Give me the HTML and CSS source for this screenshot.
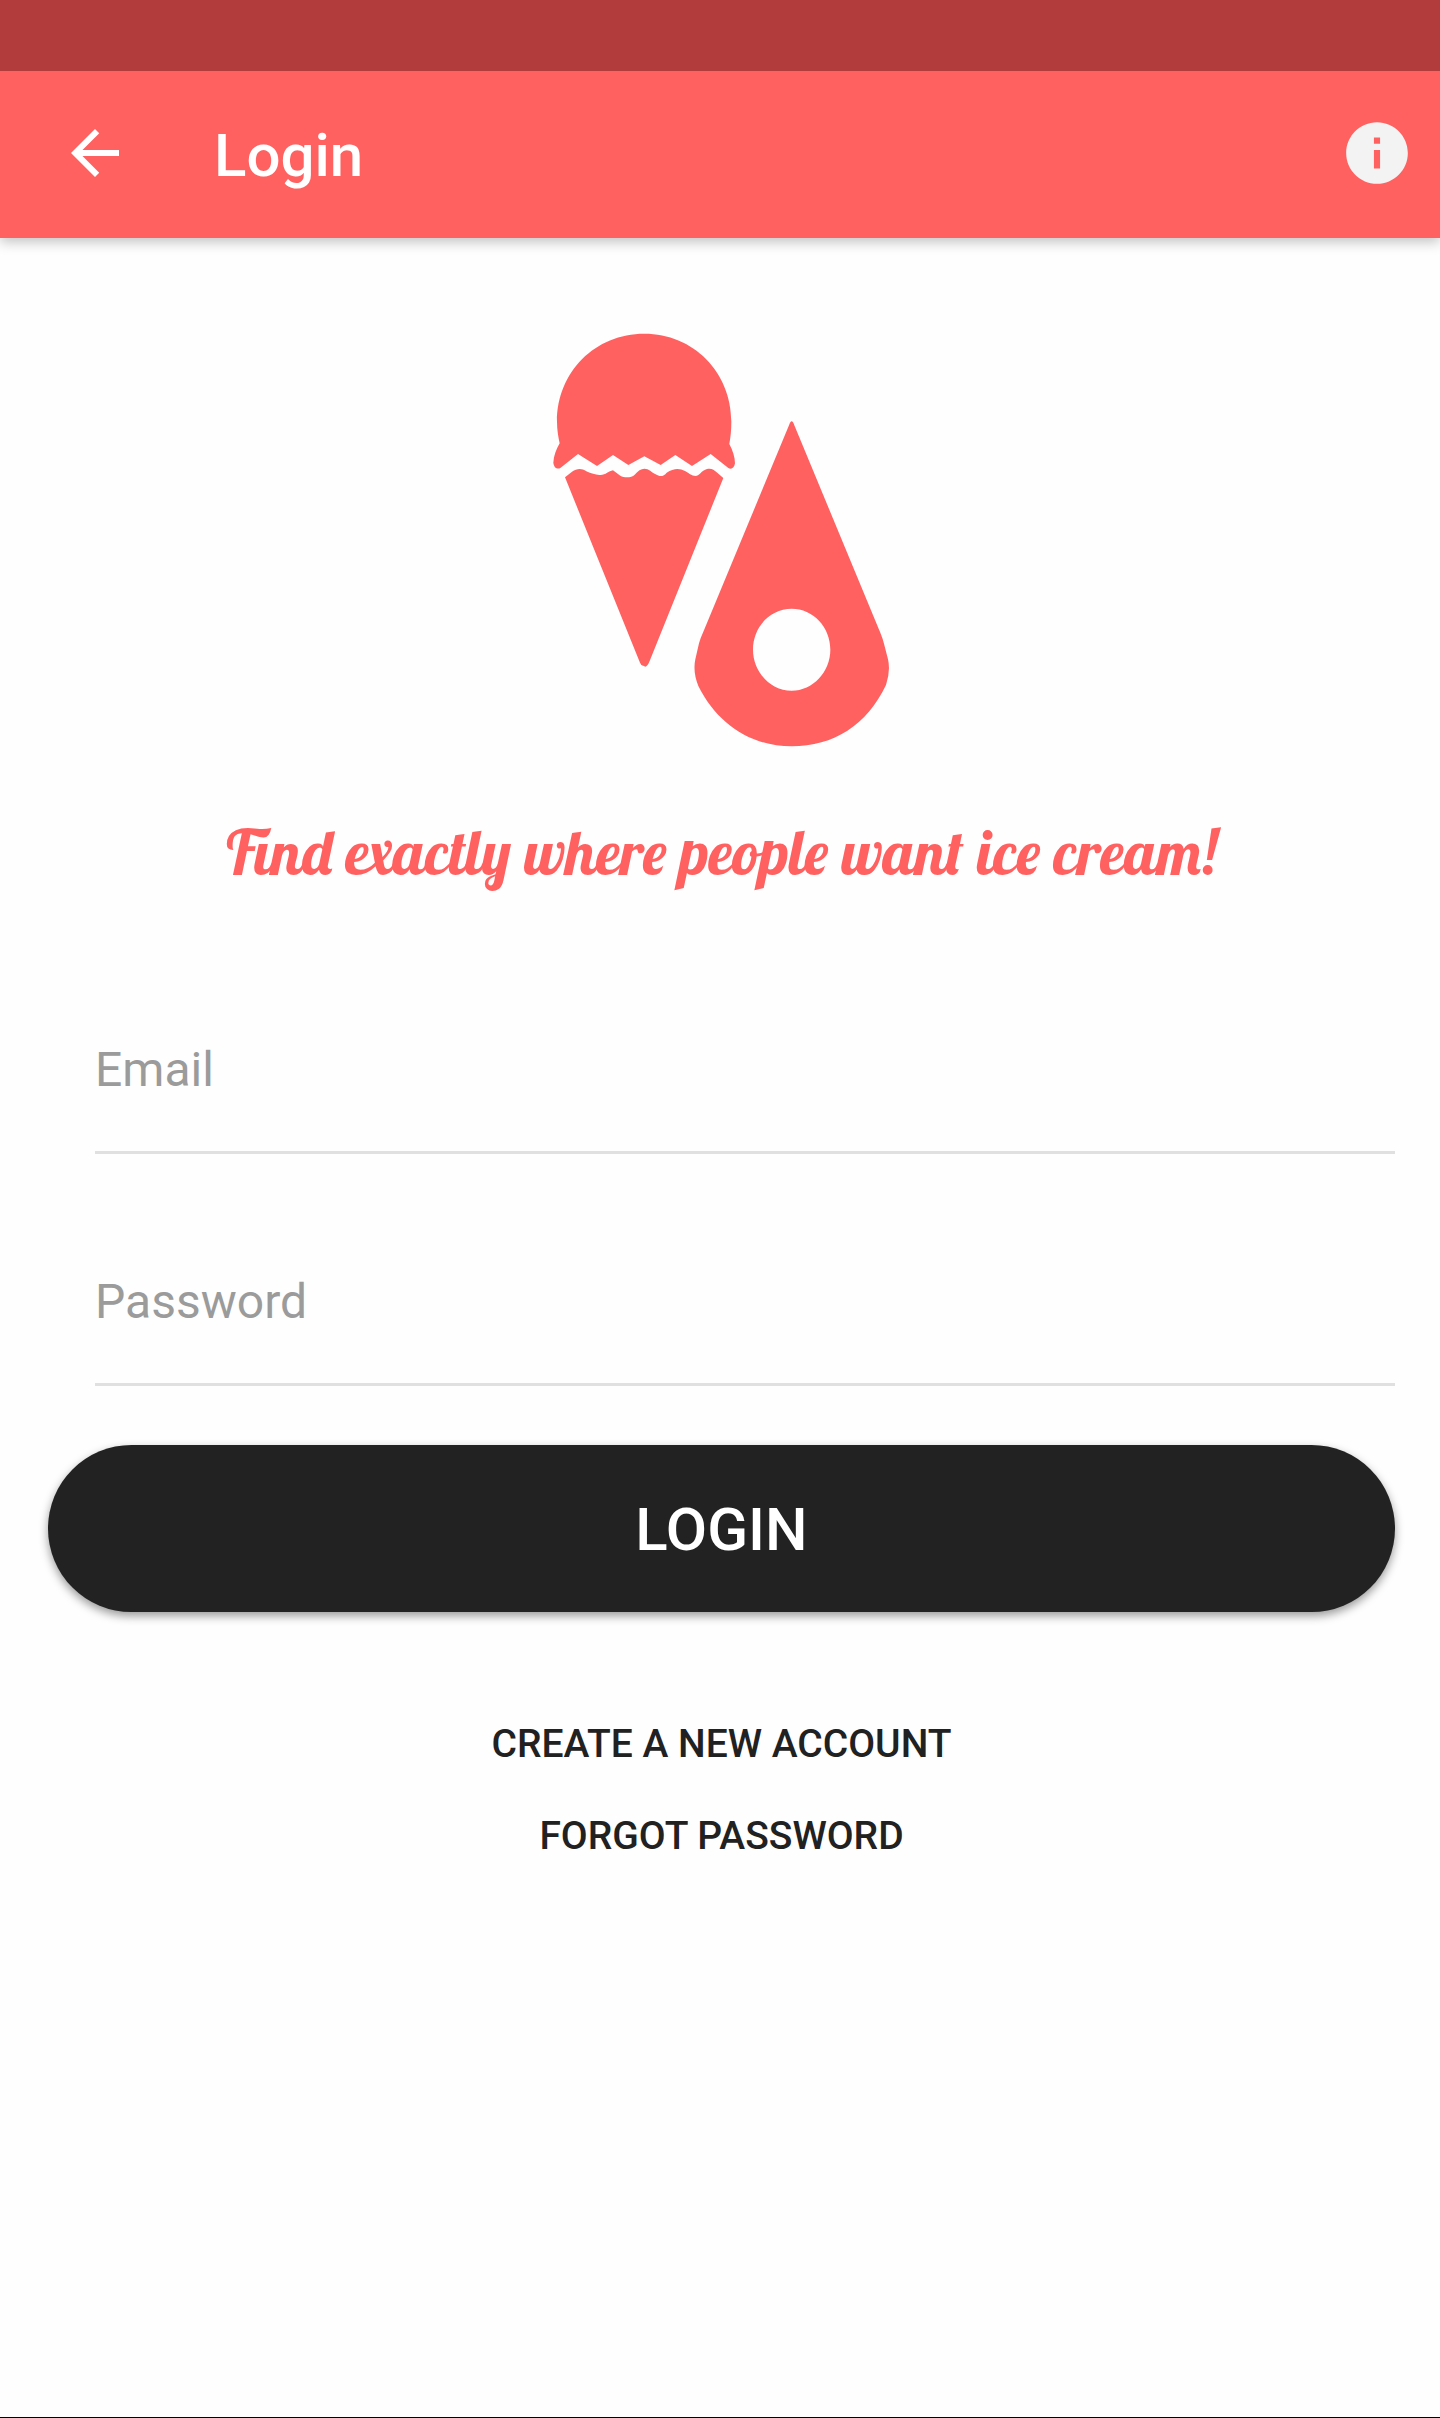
FILE: index.html
```html
<!DOCTYPE html>
<html lang="en">
<head>
  <meta charset="utf-8">
  <meta name="viewport" content="width=device-width, initial-scale=1">
  <title>Login</title>
  <link rel="stylesheet" href="styles.css">
</head>
<body class="page">
  <header class="top">
    <div class="status-bar"></div>
    <div class="app-bar">
      <button class="icon-button" type="button" aria-label="Back">
        <svg class="icon-back" viewBox="0 0 24 24" aria-hidden="true"><path d="M20 11H7.83l5.59-5.59L12 4l-8 8 8 8 1.41-1.41L7.83 13H20v-2z"/></svg>
      </button>
      <h1 class="app-title">Login</h1>
      <button class="icon-button" type="button" aria-label="Information">
        <svg class="icon-info" viewBox="0 0 24 24" aria-hidden="true"><path d="M12 2C6.48 2 2 6.48 2 12s4.48 10 10 10 10-4.48 10-10S17.52 2 12 2zm1 15h-2v-6h2v6zm0-8h-2V7h2v2z"/></svg>
      </button>
    </div>
  </header>

  <main class="content">
    <svg class="logo" viewBox="5 0 1140 1380" aria-hidden="true">
      <path d="M88 400C84 380 80 360 80 335C80 185 195 71 342 71C488 71 603 185 603 335C603 360 601 380 597 402C607 420 614 442 614 460C612 474 603 479 594 474L541 432L485 468L435 435L391 465L342 439L294 465L248 435L200 468L143 432L90 474C82 479 71 474 69 458C70 437 78 418 88 400Z"/>
      <path d="M104 502L125 485C140 475 154 474 168 484C182 491 195 494 207 495C225 497 234 483 248 481L270 497C282 504 303 504 313 494C323 482 332 476 342 476C356 476 364 487 376 493C390 502 400 499 409 488C430 474 448 474 464 483C477 490 489 502 503 496C512 490 514 482 530 477C543 474 551 479 559 487L579 504L357 1055Q351 1069 345 1070L339 1067Q333 1068 329 1058Z"/>
      <path fill-rule="evenodd" d="M776 346Q784 322 792 346L1050 968Q1058 987 1062 1005L1073 1048Q1081 1082 1067 1125C1010 1245 910 1309 784 1309C660 1309 560 1240 504 1128Q487 1085 495 1048L506 1000Q511 982 519 965ZM784 896C720 896 668 950 668 1019C668 1085 720 1142 784 1142C848 1142 900 1085 900 1019C900 950 848 896 784 896Z"/>
    </svg>
    <p class="tagline">Find exactly where people want ice cream!</p>

    <form class="login-form">
      <div class="fields">
        <div class="field">
          <input class="field-input" type="email" placeholder="Email" aria-label="Email">
        </div>
        <div class="field">
          <input class="field-input" type="password" placeholder="Password" aria-label="Password">
        </div>
      </div>
      <button class="login-button" type="submit">LOGIN</button>
    </form>

    <nav class="links">
      <a class="link" href="#create">CREATE A NEW ACCOUNT</a>
      <a class="link" href="#forgot">FORGOT PASSWORD</a>
    </nav>
  </main>
</body>
</html>
```

FILE: styles.css
```css
*,
*::before,
*::after {
  box-sizing: border-box;
}

.page {
  display: flex;
  flex-direction: column;
  min-height: 100vh;
  margin: 0;
  border-bottom: 1px solid #000;
  background: #fefefe;
  color: #212121;
  font-family: Roboto, "Liberation Sans", sans-serif;
}

.top {
  box-shadow: 0 4px 12px rgba(0, 0, 0, 0.24);
}

.status-bar {
  height: 71px;
  background: #b23b3b;
}

.app-bar {
  display: flex;
  align-items: center;
  height: 167px;
  padding: 0 26px 3px 59px;
  background: #ff6161;
}

.icon-button {
  display: flex;
  padding: 0;
  border: 0;
  background: none;
}

.icon-back {
  width: 72px;
  height: 72px;
  fill: #fff;
}

.icon-info {
  width: 74px;
  height: 74px;
  fill: #f3f3f3;
}

.app-title {
  flex: 1;
  margin: 0 0 0 83px;
  padding-top: 5px;
  color: #fff;
  font-size: 60px;
  font-weight: 500;
  line-height: 72px;
}

.content {
  display: flex;
  flex: 1;
  flex-direction: column;
  padding: 72px 45px 0 48px;
}

.logo {
  align-self: center;
  width: 380px;
  height: 460px;
  fill: #ff6161;
}

.tagline {
  margin: 44px 0 32px;
  color: #ff6161;
  font-family: Lobster, "Liberation Serif", serif;
  font-size: 62px;
  font-weight: 400;
  line-height: 76px;
  text-align: center;
}

.login-form {
  display: flex;
  flex-direction: column;
}

.fields {
  padding-left: 47px;
}

.field {
  padding-top: 66px;
}

.field-input {
  display: block;
  width: 100%;
  height: 166px;
  padding: 0;
  border: 0;
  border-bottom: 3px solid #e0e0e0;
  border-radius: 0;
  outline: 0;
  background: none;
  color: #212121;
  font: inherit;
  font-size: 48px;
}

.field-input::placeholder {
  color: #9b9b9b;
  opacity: 1;
}

.login-button {
  height: 167px;
  margin-top: 59px;
  padding: 2px 0 0;
  border: 0;
  border-radius: 84px;
  background: #222;
  box-shadow: 0 4px 10px rgba(0, 0, 0, 0.4);
  color: #fff;
  font: inherit;
  font-size: 60px;
  font-weight: 500;
}

.links {
  display: flex;
  flex-direction: column;
  align-items: center;
  margin-top: 86px;
}

.link {
  color: #212121;
  font-size: 39px;
  font-weight: 500;
  line-height: 92px;
  text-decoration: none;
}
```
